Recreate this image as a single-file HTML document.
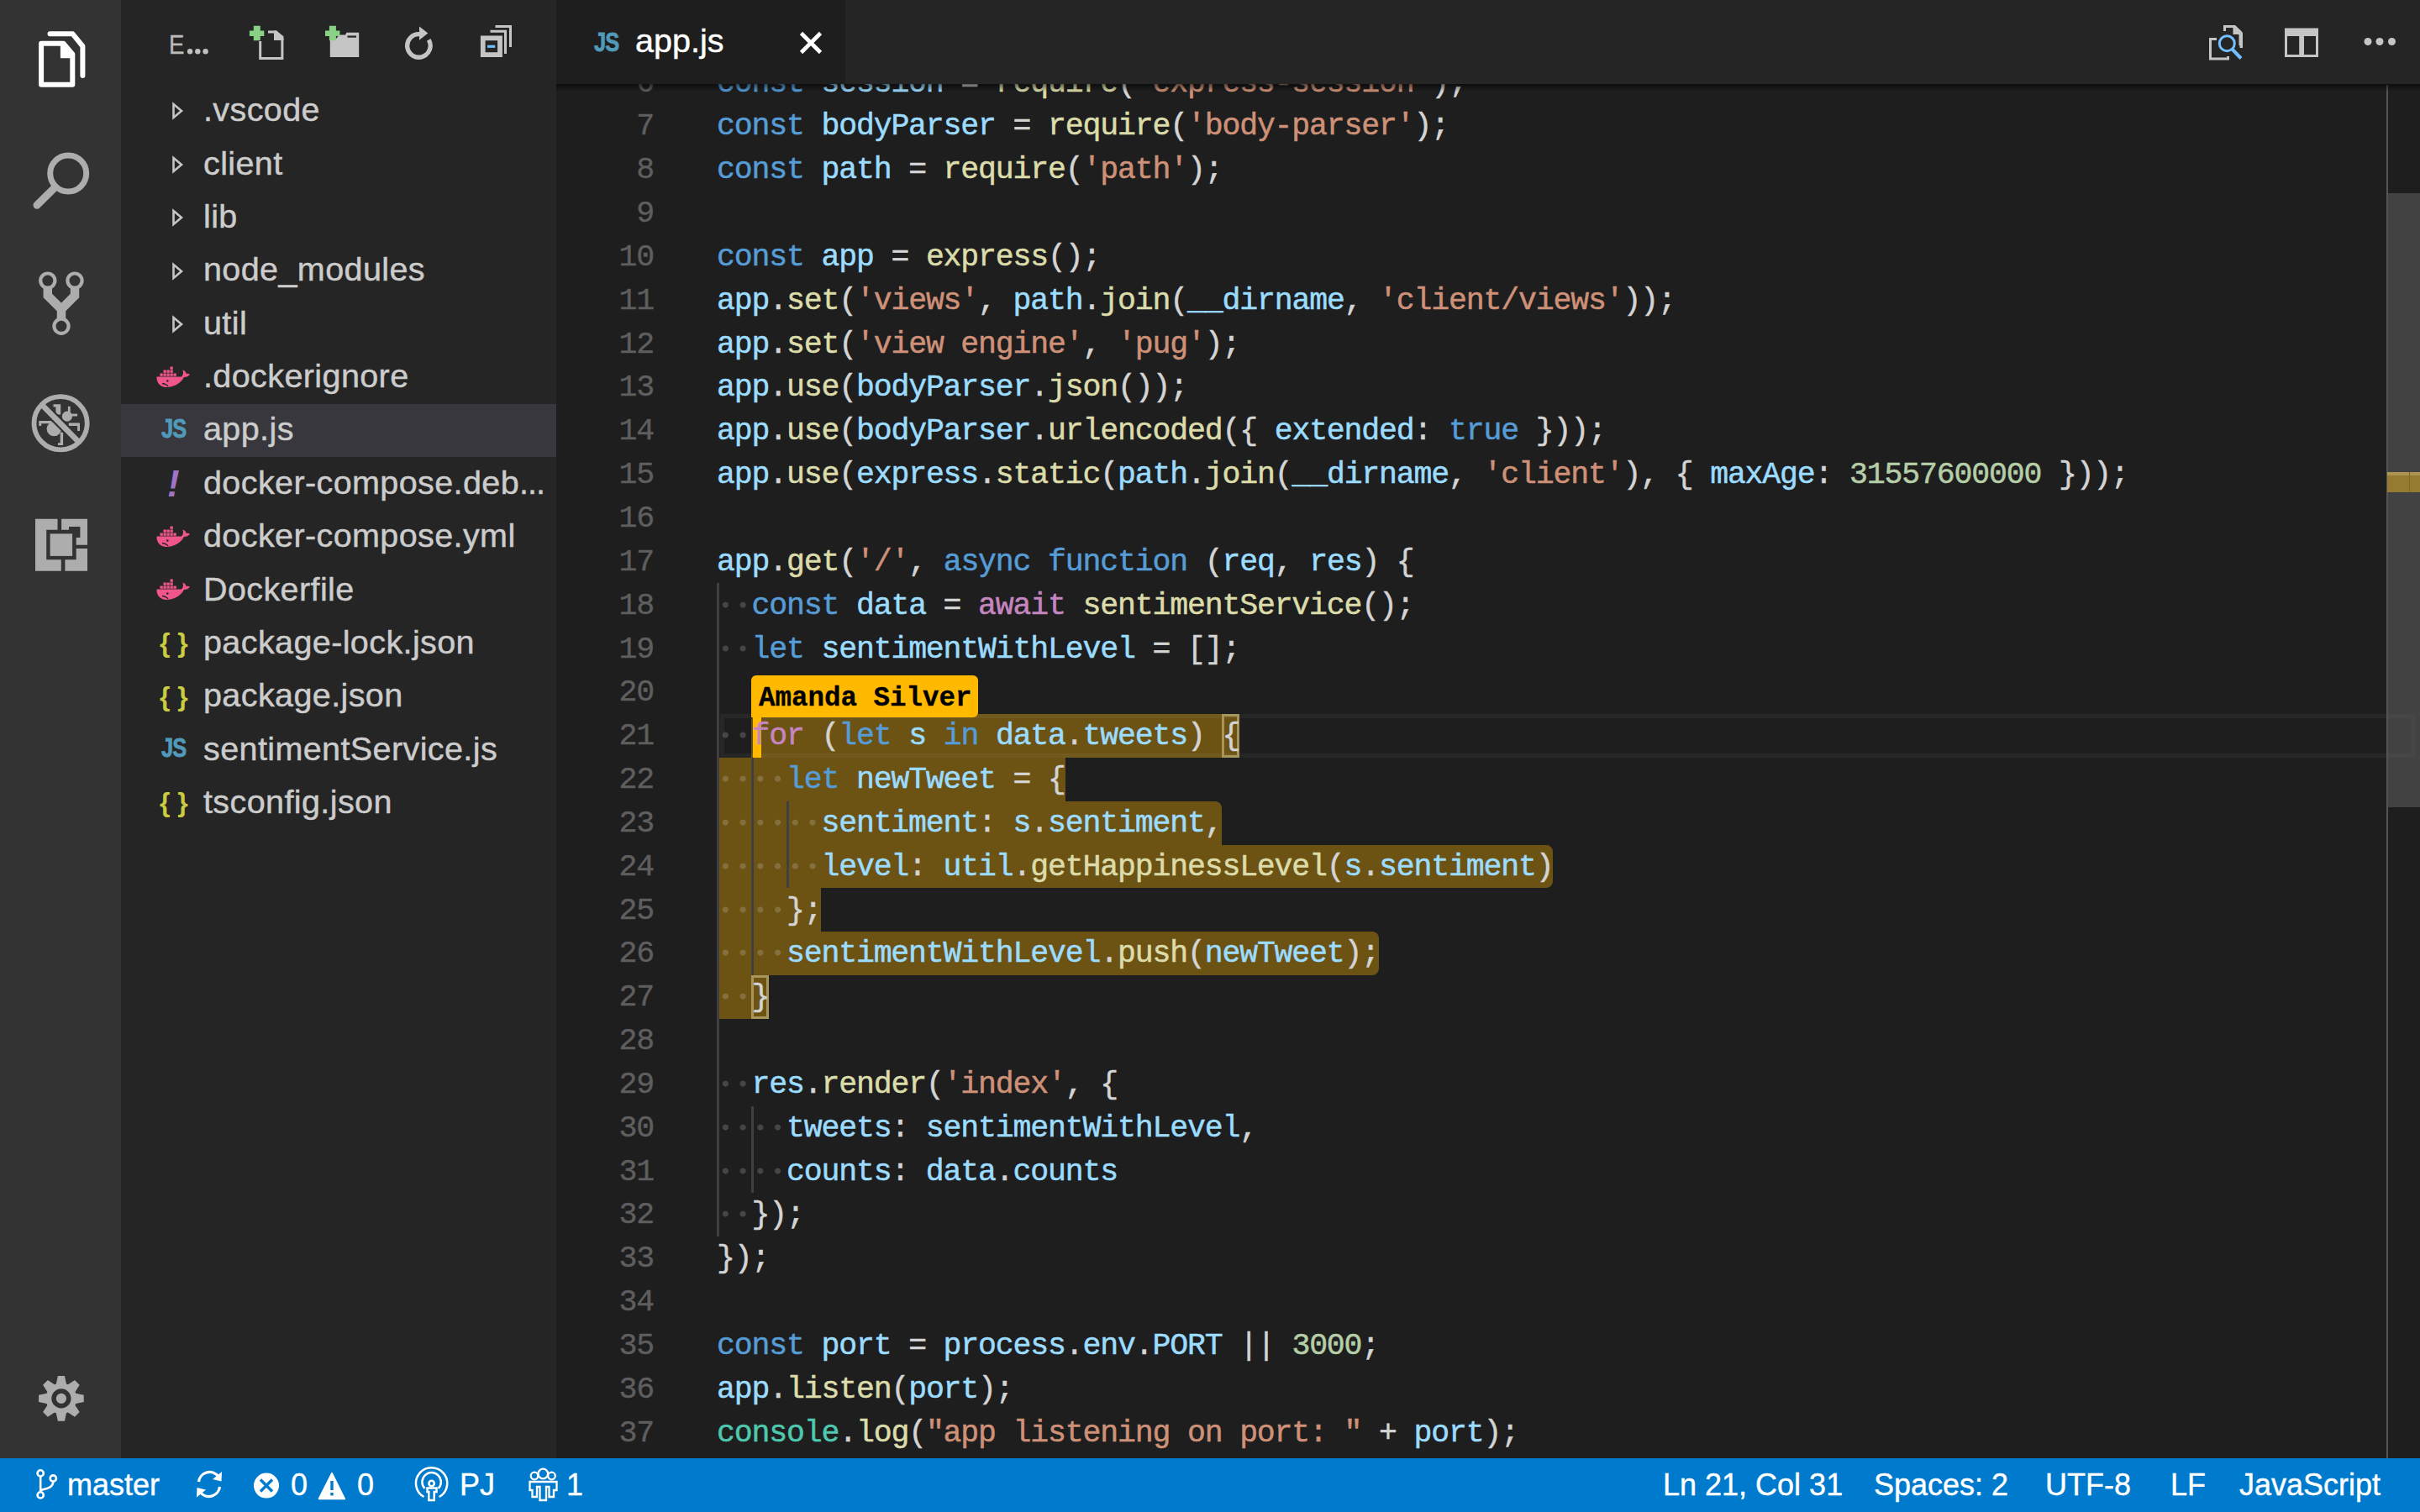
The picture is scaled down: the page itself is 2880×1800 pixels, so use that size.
<!DOCTYPE html><html><head><meta charset="utf-8"><style>
*{margin:0;padding:0;box-sizing:border-box}
html,body{width:2880px;height:1800px;overflow:hidden;background:#1e1e1e}
body{position:relative;font-family:"Liberation Sans",sans-serif}
.abs{position:absolute}
#act{position:absolute;left:0;top:0;width:144px;height:1736px;background:#333333}
#side{position:absolute;left:144px;top:0;width:518px;height:1736px;background:#252526;overflow:hidden}
#tabs{position:absolute;left:662px;top:0;width:2218px;height:100px;background:#252526}
#tab{position:absolute;left:662px;top:0;width:344px;height:100px;background:#1e1e1e}
#status{position:absolute;left:0;top:1736px;width:2880px;height:64px;background:#007acc}
.lbl{font-size:39.5px;letter-spacing:0.4px;-webkit-text-stroke:0.45px currentColor;color:#cccccc;white-space:nowrap;height:63.36px}
.jsi{font-size:31px;font-weight:bold;color:#519aba;letter-spacing:-1px;transform:scaleX(0.82);transform-origin:0 50%;-webkit-text-stroke:0.8px #519aba;height:63.36px}
.yml{font-size:44px;font-weight:bold;font-style:italic;color:#a074c4;height:63.36px}
.jsn{font-size:32px;font-weight:bold;color:#cbcb41;height:63.36px;letter-spacing:0px}
.ln{position:absolute;left:853px;height:51.84px;line-height:51.84px;font-family:"Liberation Mono",monospace;font-size:36.5px;letter-spacing:-1.167px;white-space:pre;-webkit-text-stroke:0.5px currentColor}
.num{position:absolute;left:662px;width:116px;text-align:right;height:51.84px;line-height:51.84px;font-family:"Liberation Mono",monospace;font-size:36.5px;letter-spacing:-1.167px;color:#5e5e5e;-webkit-text-stroke:0.4px currentColor}
.ln i{font-style:normal}
.k{color:#569cd6}.c{color:#c586c0}.v{color:#9cdcfe}.f{color:#dcdcaa}.s{color:#ce9178}.n{color:#b5cea8}.p{color:#d4d4d4}.t{color:#4ec9b0}.w{display:inline-block;height:51.84px;vertical-align:top;background-image:radial-gradient(circle at 10.37px 24px,rgba(227,228,226,0.2) 3.2px,transparent 3.8px);background-size:20.736px 51.84px;background-repeat:repeat-x}
.sel{position:absolute;height:51.84px;background:#6c5314}
.guide{position:absolute;width:3px;background:#404040}
.st{position:absolute;top:1736px;height:64px;line-height:64px;font-size:36px;color:#fff;white-space:nowrap;-webkit-text-stroke:0.4px #fff}
</style></head><body>
<div id="editor" class="abs" style="left:662px;top:0;width:2218px;height:1736px;background:#1e1e1e;overflow:hidden">
</div>
<div class="sel" style="left:894.47px;top:850.00px;width:580.61px;border-radius:8px 8px 8px 0px"></div>
<div class="sel" style="left:853.00px;top:901.84px;width:414.72px;border-radius:0px 0px 0px 0px"></div>
<div class="sel" style="left:853.00px;top:953.68px;width:601.34px;border-radius:0px 8px 0px 0px"></div>
<div class="sel" style="left:853.00px;top:1005.52px;width:995.33px;border-radius:0px 8px 8px 0px"></div>
<div class="sel" style="left:853.00px;top:1057.36px;width:124.42px;border-radius:0px 0px 0px 0px"></div>
<div class="sel" style="left:853.00px;top:1109.20px;width:787.97px;border-radius:0px 8px 8px 0px"></div>
<div class="sel" style="left:853.00px;top:1161.04px;width:62.21px;border-radius:0px 0px 8px 0px"></div>
<div class="abs" style="left:857px;top:850.00px;width:2017px;height:51.84px;border:5.5px solid rgba(255,255,255,0.045)"></div>
<div class="abs" style="left:1454.34px;top:850.00px;width:20.74px;height:51.84px;border:3px solid #a8955a"></div>
<div class="abs" style="left:894.47px;top:1161.04px;width:20.74px;height:51.84px;border:3px solid #a8955a"></div>
<div class="guide" style="left:853.00px;top:694.48px;height:777.60px"></div>
<div class="guide" style="left:894.47px;top:901.84px;height:259.20px"></div>
<div class="guide" style="left:894.47px;top:1316.56px;height:103.68px"></div>
<div class="guide" style="left:935.94px;top:953.68px;height:103.68px"></div>
<div class="abs" style="left:896px;top:848.00px;width:10px;height:53.5px;background:#ffb900"></div>
<div class="ln" style="top:73.60px"><i class="k">const</i><i class="p"> </i><i class="v">session</i><i class="p"> = </i><i class="f">require</i><i class="p">(</i><i class="s">&#x27;express-session&#x27;</i><i class="p">);</i></div>
<div class="num" style="top:73.60px">6</div>
<div class="ln" style="top:125.44px"><i class="k">const</i><i class="p"> </i><i class="v">bodyParser</i><i class="p"> = </i><i class="f">require</i><i class="p">(</i><i class="s">&#x27;body-parser&#x27;</i><i class="p">);</i></div>
<div class="num" style="top:125.44px">7</div>
<div class="ln" style="top:177.28px"><i class="k">const</i><i class="p"> </i><i class="v">path</i><i class="p"> = </i><i class="f">require</i><i class="p">(</i><i class="s">&#x27;path&#x27;</i><i class="p">);</i></div>
<div class="num" style="top:177.28px">8</div>
<div class="ln" style="top:229.12px"></div>
<div class="num" style="top:229.12px">9</div>
<div class="ln" style="top:280.96px"><i class="k">const</i><i class="p"> </i><i class="v">app</i><i class="p"> = </i><i class="f">express</i><i class="p">();</i></div>
<div class="num" style="top:280.96px">10</div>
<div class="ln" style="top:332.80px"><i class="v">app</i><i class="p">.</i><i class="f">set</i><i class="p">(</i><i class="s">&#x27;views&#x27;</i><i class="p">, </i><i class="v">path</i><i class="p">.</i><i class="f">join</i><i class="p">(</i><i class="v">__dirname</i><i class="p">, </i><i class="s">&#x27;client/views&#x27;</i><i class="p">));</i></div>
<div class="num" style="top:332.80px">11</div>
<div class="ln" style="top:384.64px"><i class="v">app</i><i class="p">.</i><i class="f">set</i><i class="p">(</i><i class="s">&#x27;view engine&#x27;</i><i class="p">, </i><i class="s">&#x27;pug&#x27;</i><i class="p">);</i></div>
<div class="num" style="top:384.64px">12</div>
<div class="ln" style="top:436.48px"><i class="v">app</i><i class="p">.</i><i class="f">use</i><i class="p">(</i><i class="v">bodyParser</i><i class="p">.</i><i class="f">json</i><i class="p">());</i></div>
<div class="num" style="top:436.48px">13</div>
<div class="ln" style="top:488.32px"><i class="v">app</i><i class="p">.</i><i class="f">use</i><i class="p">(</i><i class="v">bodyParser</i><i class="p">.</i><i class="f">urlencoded</i><i class="p">({ </i><i class="v">extended</i><i class="p">: </i><i class="k">true</i><i class="p"> }));</i></div>
<div class="num" style="top:488.32px">14</div>
<div class="ln" style="top:540.16px"><i class="v">app</i><i class="p">.</i><i class="f">use</i><i class="p">(</i><i class="v">express</i><i class="p">.</i><i class="f">static</i><i class="p">(</i><i class="v">path</i><i class="p">.</i><i class="f">join</i><i class="p">(</i><i class="v">__dirname</i><i class="p">, </i><i class="s">&#x27;client&#x27;</i><i class="p">), { </i><i class="v">maxAge</i><i class="p">: </i><i class="n">31557600000</i><i class="p"> }));</i></div>
<div class="num" style="top:540.16px">15</div>
<div class="ln" style="top:592.00px"></div>
<div class="num" style="top:592.00px">16</div>
<div class="ln" style="top:643.84px"><i class="v">app</i><i class="p">.</i><i class="f">get</i><i class="p">(</i><i class="s">&#x27;/&#x27;</i><i class="p">, </i><i class="k">async</i><i class="p"> </i><i class="k">function</i><i class="p"> (</i><i class="v">req</i><i class="p">, </i><i class="v">res</i><i class="p">) {</i></div>
<div class="num" style="top:643.84px">17</div>
<div class="ln" style="top:695.68px"><i class="w">  </i><i class="k">const</i><i class="p"> </i><i class="v">data</i><i class="p"> = </i><i class="c">await</i><i class="p"> </i><i class="f">sentimentService</i><i class="p">();</i></div>
<div class="num" style="top:695.68px">18</div>
<div class="ln" style="top:747.52px"><i class="w">  </i><i class="k">let</i><i class="p"> </i><i class="v">sentimentWithLevel</i><i class="p"> = [];</i></div>
<div class="num" style="top:747.52px">19</div>
<div class="ln" style="top:799.36px"></div>
<div class="num" style="top:799.36px">20</div>
<div class="ln" style="top:851.20px"><i class="w">  </i><i class="c">for</i><i class="p"> (</i><i class="k">let</i><i class="p"> </i><i class="v">s</i><i class="p"> </i><i class="k">in</i><i class="p"> </i><i class="v">data</i><i class="p">.</i><i class="v">tweets</i><i class="p">) {</i></div>
<div class="num" style="top:851.20px">21</div>
<div class="ln" style="top:903.04px"><i class="w">    </i><i class="k">let</i><i class="p"> </i><i class="v">newTweet</i><i class="p"> = {</i></div>
<div class="num" style="top:903.04px">22</div>
<div class="ln" style="top:954.88px"><i class="w">      </i><i class="v">sentiment</i><i class="p">: </i><i class="v">s</i><i class="p">.</i><i class="v">sentiment</i><i class="p">,</i></div>
<div class="num" style="top:954.88px">23</div>
<div class="ln" style="top:1006.72px"><i class="w">      </i><i class="v">level</i><i class="p">: </i><i class="v">util</i><i class="p">.</i><i class="f">getHappinessLevel</i><i class="p">(</i><i class="v">s</i><i class="p">.</i><i class="v">sentiment</i><i class="p">)</i></div>
<div class="num" style="top:1006.72px">24</div>
<div class="ln" style="top:1058.56px"><i class="w">    </i><i class="p">};</i></div>
<div class="num" style="top:1058.56px">25</div>
<div class="ln" style="top:1110.40px"><i class="w">    </i><i class="v">sentimentWithLevel</i><i class="p">.</i><i class="f">push</i><i class="p">(</i><i class="v">newTweet</i><i class="p">);</i></div>
<div class="num" style="top:1110.40px">26</div>
<div class="ln" style="top:1162.24px"><i class="w">  </i><i class="p">}</i></div>
<div class="num" style="top:1162.24px">27</div>
<div class="ln" style="top:1214.08px"></div>
<div class="num" style="top:1214.08px">28</div>
<div class="ln" style="top:1265.92px"><i class="w">  </i><i class="v">res</i><i class="p">.</i><i class="f">render</i><i class="p">(</i><i class="s">&#x27;index&#x27;</i><i class="p">, {</i></div>
<div class="num" style="top:1265.92px">29</div>
<div class="ln" style="top:1317.76px"><i class="w">    </i><i class="v">tweets</i><i class="p">: </i><i class="v">sentimentWithLevel</i><i class="p">,</i></div>
<div class="num" style="top:1317.76px">30</div>
<div class="ln" style="top:1369.60px"><i class="w">    </i><i class="v">counts</i><i class="p">: </i><i class="v">data</i><i class="p">.</i><i class="v">counts</i></div>
<div class="num" style="top:1369.60px">31</div>
<div class="ln" style="top:1421.44px"><i class="w">  </i><i class="p">});</i></div>
<div class="num" style="top:1421.44px">32</div>
<div class="ln" style="top:1473.28px"><i class="p">});</i></div>
<div class="num" style="top:1473.28px">33</div>
<div class="ln" style="top:1525.12px"></div>
<div class="num" style="top:1525.12px">34</div>
<div class="ln" style="top:1576.96px"><i class="k">const</i><i class="p"> </i><i class="v">port</i><i class="p"> = </i><i class="v">process</i><i class="p">.</i><i class="v">env</i><i class="p">.</i><i class="v">PORT</i><i class="p"> || </i><i class="n">3000</i><i class="p">;</i></div>
<div class="num" style="top:1576.96px">35</div>
<div class="ln" style="top:1628.80px"><i class="v">app</i><i class="p">.</i><i class="f">listen</i><i class="p">(</i><i class="v">port</i><i class="p">);</i></div>
<div class="num" style="top:1628.80px">36</div>
<div class="ln" style="top:1680.64px"><i class="t">console</i><i class="p">.</i><i class="f">log</i><i class="p">(</i><i class="s">&quot;app listening on port: &quot;</i><i class="p"> + </i><i class="v">port</i><i class="p">);</i></div>
<div class="num" style="top:1680.64px">37</div>
<div class="abs" style="left:894px;top:804px;width:270px;height:50px;background:#ffb900;border-radius:6px 6px 6px 0;font-family:'Liberation Mono',monospace;font-weight:bold;font-size:32.5px;line-height:55px;color:#000;padding-left:9px;-webkit-text-stroke:0.3px #000;white-space:nowrap">Amanda Silver</div>
<div class="abs" style="left:2840px;top:101px;width:1.5px;height:1635px;background:#555555"></div>
<div class="abs" style="left:2842px;top:230px;width:38px;height:731px;background:rgba(121,121,121,0.4)"></div>
<div class="abs" style="left:2841px;top:562px;width:39px;height:24px;background:#957b31;border-top:4.5px solid #ab944f"></div>
<div class="abs" style="left:2867px;top:562px;width:1px;height:24px;background:#7f6a2c"></div>
<div id="tabs"></div><div id="tab"></div>
<div class="abs" style="left:662px;top:100px;width:2218px;height:9px;background:linear-gradient(rgba(0,0,0,0.55),rgba(0,0,0,0))"></div>
<div class="abs" style="left:707px;top:0;height:101px;line-height:101px;font-size:31px;font-weight:bold;color:#519aba;letter-spacing:-1px;transform:scaleX(0.82);transform-origin:0 50%;-webkit-text-stroke:0.8px #519aba">JS</div>
<div class="abs" style="left:756px;top:-2px;height:101px;line-height:101px;font-size:39.5px;color:#ffffff;-webkit-text-stroke:0.45px #fff">app.js</div>
<svg class="abs" style="left:948px;top:34px" width="34" height="34" viewBox="0 0 34 34"><path d="M5.5,5.5 L28.5,28.5 M28.5,5.5 L5.5,28.5" stroke="#fff" stroke-width="4.6"/></svg>
<svg class="abs" style="left:2600px;top:20px" width="280" height="70" viewBox="2600 20 280 70">
<path d="M2647.5,37 V31.5 H2659 L2666,38 V54" fill="none" stroke="#c5c5c5" stroke-width="3"/>
<path d="M2657.5,30 H2660 L2669,39 V57 H2665.5 V41 H2657.5 Z" fill="#c5c5c5"/>
<path d="M2638,46.5 H2630.5 V70 H2651.5 V67" fill="none" stroke="#c5c5c5" stroke-width="3"/>
<circle cx="2650.3" cy="51.7" r="9" fill="none" stroke="#75beff" stroke-width="3"/>
<line x1="2656" y1="58" x2="2667" y2="69.5" stroke="#75beff" stroke-width="4"/>
<path d="M2719,33.5 H2759 V68 H2719 Z M2722,43 V65 H2736.2 V43 Z M2742,43 V65 H2756 V43 Z" fill="#c5c5c5" fill-rule="evenodd"/>
<circle cx="2818" cy="49.5" r="4.5" fill="#c5c5c5"/>
<circle cx="2832" cy="49.5" r="4.5" fill="#c5c5c5"/>
<circle cx="2846.5" cy="49.5" r="4.5" fill="#c5c5c5"/>
</svg>
<div id="act"></div>
<svg class="abs" width="144" height="1736" viewBox="0 0 144 1736">
<!-- files -->
<path d="M59.5,40.3 H86.5 L98.4,55 V90" fill="none" stroke="#fff" stroke-width="6" stroke-linecap="round" stroke-linejoin="round"/>
<path d="M49.1,51.7 H75.5 L86.3,64.5 V100.7 H49.1 Z" fill="none" stroke="#fff" stroke-width="6" stroke-linejoin="round"/>
<path d="M71.9,50 L88,66 V69.2 H71.9 Z" fill="#fff"/>
<!-- search -->
<circle cx="81.2" cy="206.5" r="21.5" fill="none" stroke="#adadad" stroke-width="7"/>
<line x1="44" y1="244.3" x2="64" y2="224.5" stroke="#adadad" stroke-width="9" stroke-linecap="round"/>
<!-- git -->
<g fill="none" stroke="#adadad">
<circle cx="56.8" cy="334.1" r="8.6" stroke-width="4.2"/>
<circle cx="89" cy="334.1" r="8.6" stroke-width="4.2"/>
<circle cx="73" cy="388.3" r="8.6" stroke-width="4.2"/>
<path d="M56.8,342 V352 L73,368 L89,352 V342 M73,366 V380" stroke-width="10.5"/>
</g>
<!-- debug -->
<g fill="#adadad">
<path d="M63.5,481.2 H72.2 V493.6 H66.4 V484.4 H63.5 Z"/>
<rect x="80.9" y="483.8" width="2.8" height="10"/>
<rect x="82.8" y="492.6" width="9.3" height="2.9"/>
<circle cx="79.9" cy="495.7" r="6.1"/>
<path d="M81.7,503.4 H95 V512.9 H92.1 V506.9 H81.7 Z"/>
<circle cx="64.3" cy="510.6" r="8.7"/>
<path d="M46.3,501 H61.6 V504.2 H49.2 V507.1 H46.3 Z"/>
<path d="M71.7,514.8 H75.1 V529.9 H69 V527.2 H71.7 Z"/>
</g>
<line x1="50" y1="482" x2="93.5" y2="526" stroke="#333333" stroke-width="11"/>
<circle cx="72.1" cy="503.8" r="31.6" fill="none" stroke="#adadad" stroke-width="5.8"/>
<line x1="49" y1="481" x2="94.5" y2="527" stroke="#adadad" stroke-width="6.7"/>
<!-- extensions -->
<g fill="#adadad">
<path d="M42,617.8 H68.5 V630.7 H55.2 V666.3 H72.8 V679.8 H42 Z"/>
<path d="M73.1,617.8 H104 V648.7 H90.7 V640 H95.4 V627 H82 V630.7 H73.1 Z"/>
<path d="M77.4,666.3 H90.7 V653 H104 V679.8 H77.4 Z"/>
<rect x="59.6" y="635.4" width="26.5" height="26.5"/>
</g>
<!-- gear -->
<polygon points="66.85,1647.52 68.85,1638.10 76.95,1638.10 78.95,1647.52 80.91,1648.33 88.98,1643.09 94.71,1648.82 89.47,1656.89 90.28,1658.85 99.70,1660.85 99.70,1668.95 90.28,1670.95 89.47,1672.91 94.71,1680.98 88.98,1686.71 80.91,1681.47 78.95,1682.28 76.95,1691.70 68.85,1691.70 66.85,1682.28 64.89,1681.47 56.82,1686.71 51.09,1680.98 56.33,1672.91 55.52,1670.95 46.10,1668.95 46.10,1660.85 55.52,1658.85 56.33,1656.89 51.09,1648.82 56.82,1643.09 64.89,1648.33" fill="#adadad"/>
<circle cx="72.9" cy="1664.9" r="8.85" fill="none" stroke="#333333" stroke-width="5.5"/>
</svg>
<div id="side"></div>
<div class="abs" style="left:201px;top:3px;height:101px;line-height:101px;font-size:32px;color:#bbbbbb;-webkit-text-stroke:0.4px #bbb;transform:scaleX(0.86);transform-origin:0 50%">E</div>
<svg class="abs" style="left:215px;top:50px" width="40" height="20" viewBox="215 50 40 20"><g fill="#c0c0c0"><circle cx="226.1" cy="61.3" r="3.2"/><circle cx="235.3" cy="61.3" r="3.2"/><circle cx="244.6" cy="61.3" r="3.2"/></g></svg>
<svg class="abs" style="left:0;top:0" width="662" height="101" viewBox="0 0 662 101">
<!-- new file -->
<path d="M309.7,49 V69.4 H335.9 V44 L328.5,38.1 H319" fill="none" stroke="#c5c5c5" stroke-width="3"/>
<path d="M326,36.6 H329 L337.4,45 V48 H326 Z" fill="#c5c5c5"/>
<path d="M301.8,30.8 H309.8 V36.4 H314.3 V42.9 H309.8 V48.2 H301.8 V42.9 H296.9 V36.4 H301.8 Z" fill="#89d185"/>
<!-- new folder -->
<path d="M392.8,68 V46 H400 L404,41.5 H411 L412.5,38.8 H427.2 V68 Z" fill="#c5c5c5"/>
<rect x="413.5" y="42.5" width="10.5" height="2.2" fill="#252526"/>
<path d="M391.9,30.8 H399.9 V36.4 H404.4 V42.9 H399.9 V48.2 H391.9 V42.9 H387 V36.4 H391.9 Z" fill="#89d185"/>
<!-- refresh -->
<path d="M499.5,40.75 A13.75,13.75 0 1 0 510.2,47.4" fill="none" stroke="#c5c5c5" stroke-width="5.3"/>
<path d="M499,31.5 L509.3,39.4 L499,47.8 Z" fill="#c5c5c5"/>
<!-- collapse -->
<path d="M583.5,37.3 H601.5 V64" fill="none" stroke="#c5c5c5" stroke-width="3"/>
<path d="M589.5,31.5 H607.5 V56" fill="none" stroke="#c5c5c5" stroke-width="3"/>
<path d="M571.9,42.4 H597.9 V68 H571.9 Z M577.6,48.2 V62.2 H592.1 V48.2 Z" fill="#c5c5c5" fill-rule="evenodd"/>
<rect x="580" y="53.7" width="9.2" height="3.2" fill="#75beff"/>
</svg>
<svg class="abs" style="left:200px;top:118.48px" width="24" height="28" viewBox="0 0 24 28"><path d="M6.5,6 L16,14 L6.5,22 Z" fill="none" stroke="#c5c5c5" stroke-width="2.6" stroke-linejoin="miter"/></svg>
<div class="abs lbl" style="left:242px;top:99.30px;line-height:63.36px">.vscode</div>
<svg class="abs" style="left:200px;top:181.84px" width="24" height="28" viewBox="0 0 24 28"><path d="M6.5,6 L16,14 L6.5,22 Z" fill="none" stroke="#c5c5c5" stroke-width="2.6" stroke-linejoin="miter"/></svg>
<div class="abs lbl" style="left:242px;top:162.66px;line-height:63.36px">client</div>
<svg class="abs" style="left:200px;top:245.20px" width="24" height="28" viewBox="0 0 24 28"><path d="M6.5,6 L16,14 L6.5,22 Z" fill="none" stroke="#c5c5c5" stroke-width="2.6" stroke-linejoin="miter"/></svg>
<div class="abs lbl" style="left:242px;top:226.02px;line-height:63.36px">lib</div>
<svg class="abs" style="left:200px;top:308.56px" width="24" height="28" viewBox="0 0 24 28"><path d="M6.5,6 L16,14 L6.5,22 Z" fill="none" stroke="#c5c5c5" stroke-width="2.6" stroke-linejoin="miter"/></svg>
<div class="abs lbl" style="left:242px;top:289.38px;line-height:63.36px">node_modules</div>
<svg class="abs" style="left:200px;top:371.92px" width="24" height="28" viewBox="0 0 24 28"><path d="M6.5,6 L16,14 L6.5,22 Z" fill="none" stroke="#c5c5c5" stroke-width="2.6" stroke-linejoin="miter"/></svg>
<div class="abs lbl" style="left:242px;top:352.74px;line-height:63.36px">util</div>
<svg class="abs" style="left:186px;top:434.6px" width="42" height="28" viewBox="0 0 42 28">
<g fill="#f0568b">
<path d="M0.5,13.5 H30 C32,11 32.5,9 31.5,5.5 C34,6 35.5,8 35.5,10 C37.5,9.5 39,10.5 40,10.5 C38.5,13 36,14 33,14 C29,22 20,26 12,26 C5,26 0,21 0.5,13.5 Z"/>
<rect x="4.5" y="9.5" width="3.3" height="3.3"/><rect x="8.5" y="9.5" width="3.3" height="3.3"/><rect x="12.5" y="9.5" width="3.3" height="3.3"/><rect x="16.5" y="9.5" width="3.3" height="3.3"/><rect x="20.5" y="9.5" width="3.3" height="3.3"/>
<rect x="8.5" y="5.5" width="3.3" height="3.3"/><rect x="12.5" y="5.5" width="3.3" height="3.3"/><rect x="16.5" y="5.5" width="3.3" height="3.3"/>
<rect x="16.5" y="1.5" width="3.3" height="3.3"/>
</g>
<circle cx="13.3" cy="18.5" r="1.3" fill="#252526"/>
<path d="M7,21.5 C10,22 13,23.5 14,25" stroke="#252526" stroke-width="1.3" fill="none"/>
</svg>
<div class="abs lbl" style="left:242px;top:416.10px;line-height:63.36px">.dockerignore</div>
<div class="abs" style="left:144px;top:480.96px;width:518px;height:63.36px;background:#37373d"></div>
<div class="abs jsi" style="left:192px;top:478.96px;line-height:63.36px">JS</div>
<div class="abs lbl" style="left:242px;top:479.46px;line-height:63.36px">app.js</div>
<div class="abs yml" style="left:199px;top:544.32px;line-height:63.36px">!</div>
<div class="abs lbl" style="left:242px;top:542.82px;line-height:63.36px">docker-compose.deb<span style="letter-spacing:-1px">...</span></div>
<svg class="abs" style="left:186px;top:624.68px" width="42" height="28" viewBox="0 0 42 28">
<g fill="#f0568b">
<path d="M0.5,13.5 H30 C32,11 32.5,9 31.5,5.5 C34,6 35.5,8 35.5,10 C37.5,9.5 39,10.5 40,10.5 C38.5,13 36,14 33,14 C29,22 20,26 12,26 C5,26 0,21 0.5,13.5 Z"/>
<rect x="4.5" y="9.5" width="3.3" height="3.3"/><rect x="8.5" y="9.5" width="3.3" height="3.3"/><rect x="12.5" y="9.5" width="3.3" height="3.3"/><rect x="16.5" y="9.5" width="3.3" height="3.3"/><rect x="20.5" y="9.5" width="3.3" height="3.3"/>
<rect x="8.5" y="5.5" width="3.3" height="3.3"/><rect x="12.5" y="5.5" width="3.3" height="3.3"/><rect x="16.5" y="5.5" width="3.3" height="3.3"/>
<rect x="16.5" y="1.5" width="3.3" height="3.3"/>
</g>
<circle cx="13.3" cy="18.5" r="1.3" fill="#252526"/>
<path d="M7,21.5 C10,22 13,23.5 14,25" stroke="#252526" stroke-width="1.3" fill="none"/>
</svg>
<div class="abs lbl" style="left:242px;top:606.18px;line-height:63.36px">docker-compose.yml</div>
<svg class="abs" style="left:186px;top:688.04px" width="42" height="28" viewBox="0 0 42 28">
<g fill="#f0568b">
<path d="M0.5,13.5 H30 C32,11 32.5,9 31.5,5.5 C34,6 35.5,8 35.5,10 C37.5,9.5 39,10.5 40,10.5 C38.5,13 36,14 33,14 C29,22 20,26 12,26 C5,26 0,21 0.5,13.5 Z"/>
<rect x="4.5" y="9.5" width="3.3" height="3.3"/><rect x="8.5" y="9.5" width="3.3" height="3.3"/><rect x="12.5" y="9.5" width="3.3" height="3.3"/><rect x="16.5" y="9.5" width="3.3" height="3.3"/><rect x="20.5" y="9.5" width="3.3" height="3.3"/>
<rect x="8.5" y="5.5" width="3.3" height="3.3"/><rect x="12.5" y="5.5" width="3.3" height="3.3"/><rect x="16.5" y="5.5" width="3.3" height="3.3"/>
<rect x="16.5" y="1.5" width="3.3" height="3.3"/>
</g>
<circle cx="13.3" cy="18.5" r="1.3" fill="#252526"/>
<path d="M7,21.5 C10,22 13,23.5 14,25" stroke="#252526" stroke-width="1.3" fill="none"/>
</svg>
<div class="abs lbl" style="left:242px;top:669.54px;line-height:63.36px">Dockerfile</div>
<div class="abs jsn" style="left:190px;top:734.40px;line-height:63.36px">{ }</div>
<div class="abs lbl" style="left:242px;top:732.90px;line-height:63.36px">package-lock.json</div>
<div class="abs jsn" style="left:190px;top:797.76px;line-height:63.36px">{ }</div>
<div class="abs lbl" style="left:242px;top:796.26px;line-height:63.36px">package.json</div>
<div class="abs jsi" style="left:192px;top:859.12px;line-height:63.36px">JS</div>
<div class="abs lbl" style="left:242px;top:859.62px;line-height:63.36px">sentimentService.js</div>
<div class="abs jsn" style="left:190px;top:924.48px;line-height:63.36px">{ }</div>
<div class="abs lbl" style="left:242px;top:922.98px;line-height:63.36px">tsconfig.json</div>
<div id="status"></div>
<svg class="abs" style="left:0;top:1736px" width="720" height="64" viewBox="0 1736 720 64">
<g fill="none" stroke="#ffffff" stroke-width="2.6">
<circle cx="48.2" cy="1753.9" r="3.6"/>
<circle cx="48.2" cy="1779.9" r="3.6"/>
<circle cx="63.3" cy="1760" r="3.6"/>
<path d="M48.2,1757.5 V1776.3"/>
<path d="M63.3,1763.6 C63.3,1770 58,1772 48.2,1774"/>
</g>
<path d="M260,1758 A13,13 0 0 0 236.5,1764" fill="none" stroke="#ffffff" stroke-width="3.3"/>
<path d="M238,1776 A13,13 0 0 0 261.5,1770" fill="none" stroke="#ffffff" stroke-width="3.3"/>
<path d="M264,1752 L263.5,1763.5 L253,1761 Z" fill="#ffffff"/>
<path d="M234,1782.5 L234.5,1771 L245,1773.5 Z" fill="#ffffff"/>
<circle cx="317" cy="1768.6" r="15" fill="#ffffff"/>
<path d="M310,1761.6 L324,1775.6 M324,1761.6 L310,1775.6" stroke="#007acc" stroke-width="3.5"/>
<path d="M395,1753.9 L410,1784.3 H379.7 Z" fill="#ffffff" stroke="#ffffff" stroke-width="2" stroke-linejoin="round"/>
<rect x="393.3" y="1763" width="3.4" height="11" fill="#007acc"/>
<rect x="393.3" y="1777" width="3.4" height="3.4" fill="#007acc"/>
<g fill="none" stroke="#ffffff" stroke-width="2.5">
<path d="M504.5,1782 A18.6,18.6 0 1 1 522.7,1782"/>
<path d="M505.5,1772 A11.2,11.2 0 1 1 521.7,1772"/>
<circle cx="513.6" cy="1766" r="3.2"/>
<path d="M508.5,1771.5 H519.5 V1776 H516.7 V1786 H510.3 V1776 H508.5 Z"/>
</g>
<g fill="none" stroke="#ffffff" stroke-width="2.3">
<circle cx="646.3" cy="1754.5" r="5.8"/>
<circle cx="636" cy="1757" r="4.3"/>
<circle cx="656.5" cy="1757" r="4.3"/>
<path d="M630.5,1764 H662.5 V1774 H659 V1782 H653.5 V1770 H650 V1786 H642.5 V1770 H639 V1782 H633.5 V1774 H630.5 Z"/>
</g>
</svg>
<div class="st" style="left:80px">master</div>
<div class="st" style="left:346px">0</div>
<div class="st" style="left:425px">0</div>
<div class="st" style="left:547px">PJ</div>
<div class="st" style="left:674px">1</div>
<div class="st" style="left:1979px">Ln 21, Col 31</div>
<div class="st" style="left:2230px">Spaces: 2</div>
<div class="st" style="left:2434px">UTF-8</div>
<div class="st" style="left:2583px">LF</div>
<div class="st" style="left:2665px">JavaScript</div>
</body></html>
